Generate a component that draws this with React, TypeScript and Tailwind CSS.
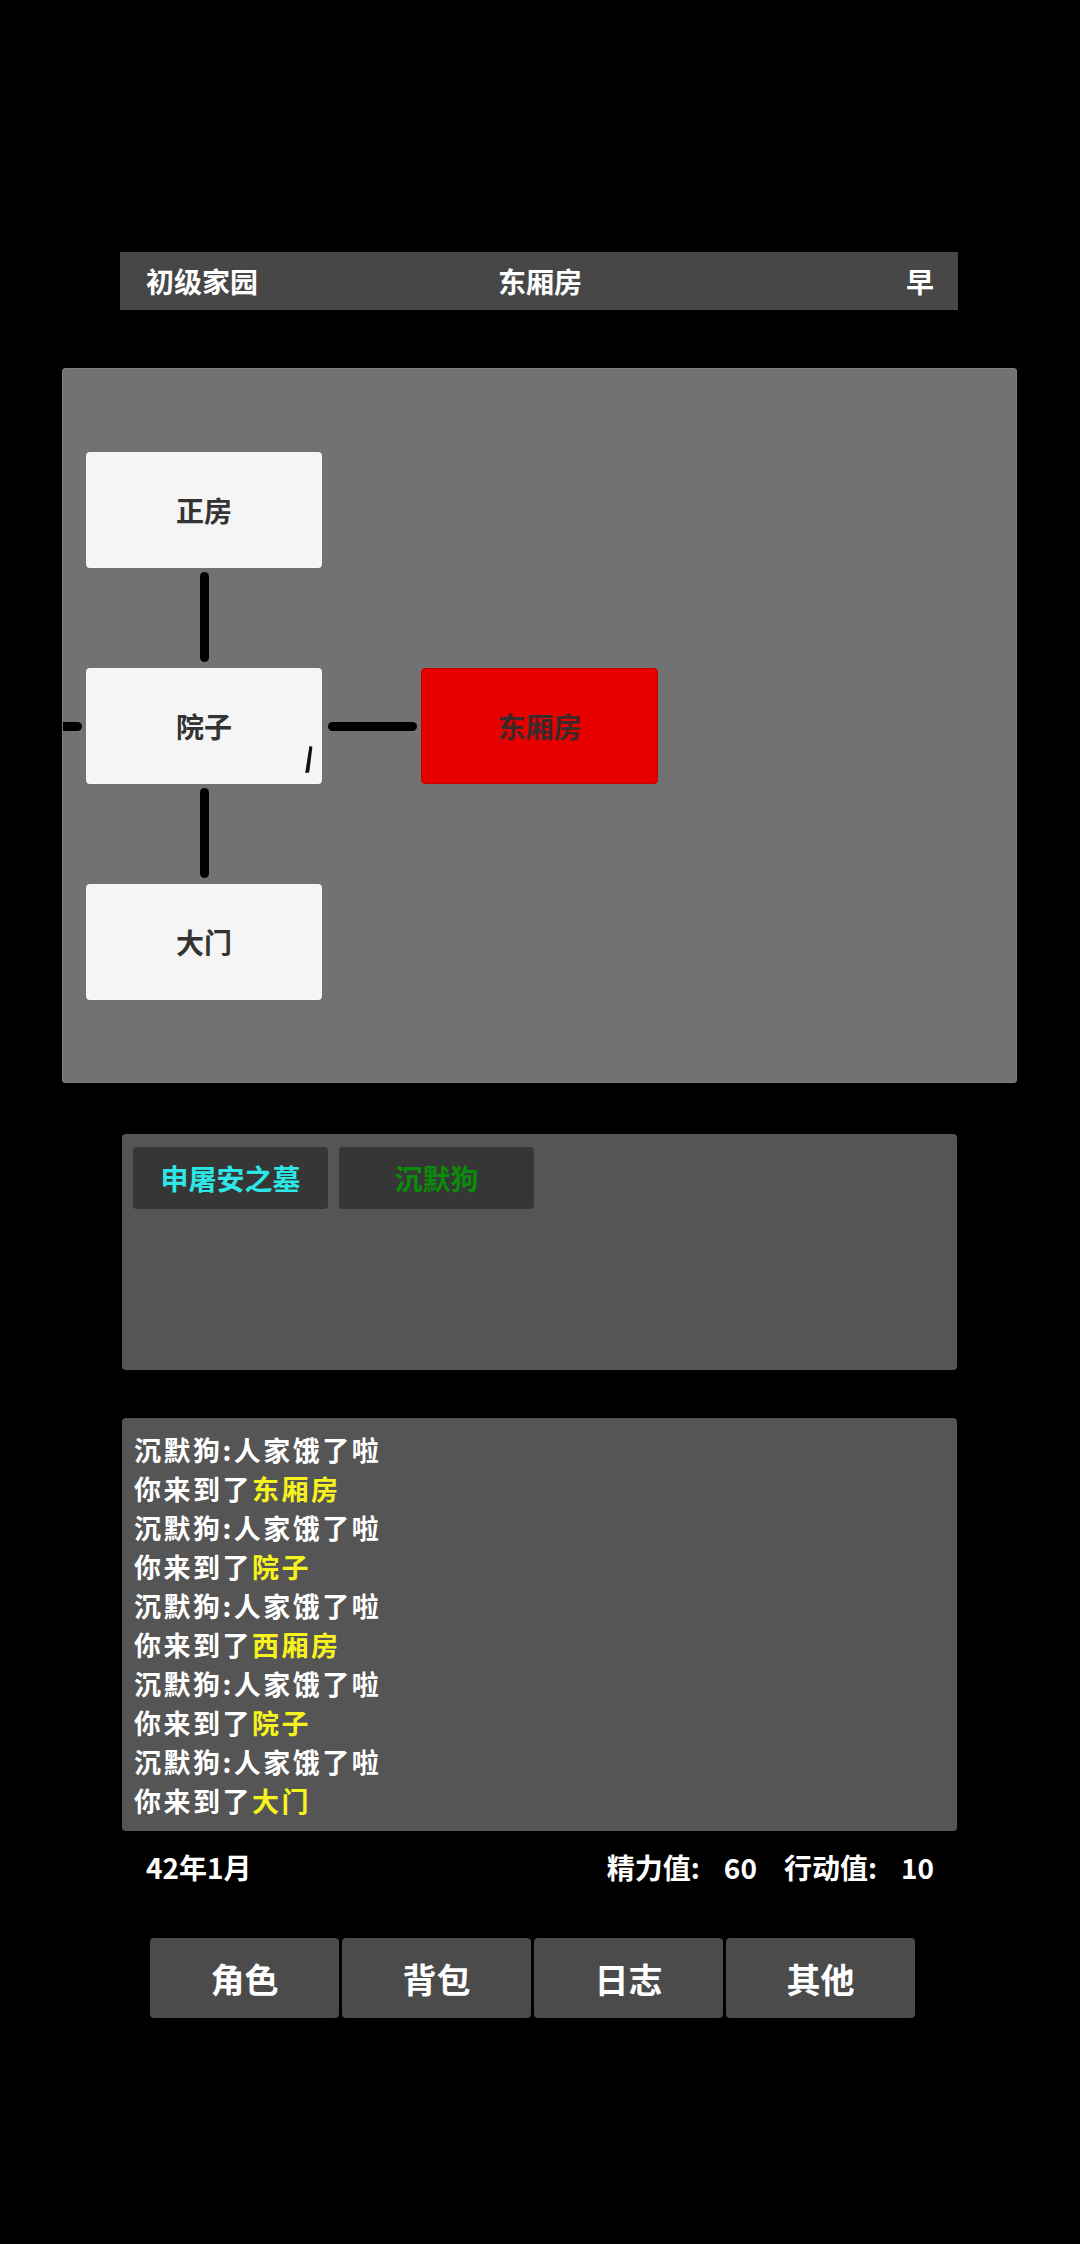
import React from "react";

const logs: { text: string; hl?: string }[] = [
  { text: "沉默狗:人家饿了啦" },
  { text: "你来到了", hl: "东厢房" },
  { text: "沉默狗:人家饿了啦" },
  { text: "你来到了", hl: "院子" },
  { text: "沉默狗:人家饿了啦" },
  { text: "你来到了", hl: "西厢房" },
  { text: "沉默狗:人家饿了啦" },
  { text: "你来到了", hl: "院子" },
  { text: "沉默狗:人家饿了啦" },
  { text: "你来到了", hl: "大门" },
];

function Room({ name, active, children }: { name: string; active?: boolean; children?: React.ReactNode }) {
  return (
    <div
      className={
        active
          ? "relative w-full h-full rounded-[4px] bg-[#e60000] border border-[#c20000] flex items-center justify-center text-[28px] font-bold text-[#3a2a2a]"
          : "relative w-full h-full rounded-[4px] bg-[#f5f5f5] flex items-center justify-center text-[28px] font-bold text-[#333333]"
      }
    >
      {name}
      {children}
    </div>
  );
}

function VLine() {
  return (
    <div className="h-full flex justify-center pt-[4px] pb-[6px]">
      <div className="w-[9px] h-full bg-black rounded-full" />
    </div>
  );
}

export default function App() {
  return (
    <div className="w-[1080px] h-[2244px] bg-black flex flex-col font-['Noto_Sans_CJK_SC','Noto_Sans',sans-serif]">
      {/* header */}
      <div className="ml-[120px] mt-[252px] w-[838px] h-[58px] bg-[#474747] grid grid-cols-3 items-center pl-[26px] pr-[24px] text-white text-[28px] font-bold leading-none">
        <div className="text-left">初级家园</div>
        <div className="text-center">东厢房</div>
        <div className="text-right">早</div>
      </div>

      {/* map */}
      <div className="ml-[62px] mt-[58px] w-[955px] h-[715px] bg-[#727272] rounded-[3px] border border-[#7e7e7e] pt-[83px]">
        <div className="grid grid-cols-[23px_236px_99px_237px] grid-rows-[116px_100px_116px_100px_116px]">
          <div />
          <Room name="正房" />
          <div />
          <div />

          <div />
          <VLine />
          <div />
          <div />

          <div className="flex items-center">
            <div className="w-[19px] h-[9px] bg-black rounded-r-full" />
          </div>
          <Room name="院子">
            <svg className="absolute right-[9px] bottom-[11px]" width="9" height="27" viewBox="0 0 9 27">
              <path d="M5.4 0 L8.4 0.8 L5.2 26.4 L1.2 27 Z" fill="#111" />
            </svg>
          </Room>
          <div className="flex items-center pl-[6px] pr-[4px]">
            <div className="w-full h-[9px] bg-black rounded-full" />
          </div>
          <Room name="东厢房" active />

          <div />
          <VLine />
          <div />
          <div />

          <div />
          <Room name="大门" />
          <div />
          <div />
        </div>
      </div>

      {/* npc panel */}
      <div className="ml-[122px] mt-[51px] w-[835px] h-[236px] bg-[#555555] rounded-[4px] pt-[13px] pl-[11px] flex items-start gap-[11px]">
        <div className="w-[195px] h-[62px] bg-[#363636] rounded-[4px] flex items-center justify-center text-[28px] font-bold text-[#2ee6e6]">
          申屠安之墓
        </div>
        <div className="w-[195px] h-[62px] bg-[#363636] rounded-[4px] flex items-center justify-center text-[28px] font-bold text-[#0b8a0b]">
          沉默狗
        </div>
      </div>

      {/* log panel */}
      <div className="ml-[122px] mt-[48px] w-[835px] h-[413px] bg-[#555555] rounded-[4px] pt-[12px] pl-[12px] flex flex-col text-[27px] tracking-[2.5px] font-bold leading-[39px] text-white">
        {logs.map((l, i) => (
          <div key={i} className="h-[39px]">
            {l.text}
            {l.hl && <span className="text-[#f7f31c]">{l.hl}</span>}
          </div>
        ))}
      </div>

      {/* status */}
      <div className="ml-[146px] mt-[16px] w-[784px] h-[40px] flex items-center justify-between text-white text-[28px] font-bold leading-none">
        <div>42年1月</div>
        <div className="flex items-center">
          <span>精力值:</span>
          <span className="ml-[21px] w-[39px] text-center">60</span>
          <span className="ml-[24px]">行动值:</span>
          <span className="ml-[24px] w-[29px] text-center">10</span>
        </div>
      </div>

      {/* bottom buttons */}
      <div className="ml-[150px] mt-[51px] flex gap-[3px]">
        {["角色", "背包", "日志", "其他"].map((b) => (
          <div
            key={b}
            className="w-[189px] h-[80px] bg-[#4b4b4b] rounded-[4px] flex items-center justify-center text-white text-[34px] font-bold"
          >
            {b}
          </div>
        ))}
      </div>
    </div>
  );
}
